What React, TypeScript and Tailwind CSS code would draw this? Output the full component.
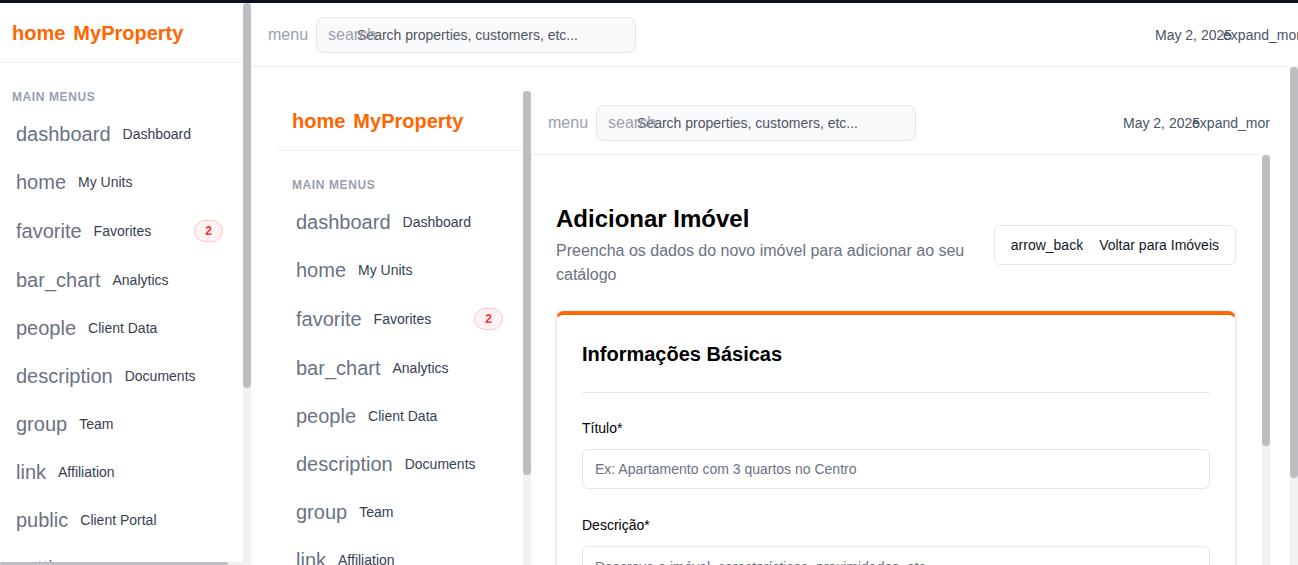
import React from "react";

type Item = { icon: string; label: string; badge?: number };

const ITEMS: Item[] = [
  { icon: "dashboard", label: "Dashboard" },
  { icon: "home", label: "My Units" },
  { icon: "favorite", label: "Favorites", badge: 2 },
  { icon: "bar_chart", label: "Analytics" },
  { icon: "people", label: "Client Data" },
  { icon: "description", label: "Documents" },
  { icon: "group", label: "Team" },
  { icon: "link", label: "Affiliation" },
  { icon: "public", label: "Client Portal" },
  { icon: "settings", label: "Settings" },
  { icon: "help", label: "Help" },
];

function VScroll({ thumb }: { thumb: string }) {
  return (
    <div className="w-2 shrink-0 self-stretch bg-[#f1f1f2]">
      <div className={thumb} />
    </div>
  );
}

function Sidebar({ inner }: { inner?: boolean }) {
  return (
    <div
      className={
        inner
          ? "w-[247px] shrink-0 flex flex-col bg-white"
          : "w-[243px] shrink-0 flex flex-col bg-white"
      }
    >
      <div
        className={`h-[60px] shrink-0 flex items-center gap-2 border-b border-[#f0f0f0] ${
          inner ? "pl-4" : "pl-3"
        } text-[20px] font-bold text-[#ff6600]`}
      >
        <span>home</span>
        <span>MyProperty</span>
      </div>
      <div className="flex-1 min-h-0 overflow-hidden">
        <div
          className={`pt-[26px] ${
            inner ? "pl-4" : "pl-3"
          } text-xs leading-4 font-semibold uppercase tracking-wider text-gray-400`}
        >
          Main Menus
        </div>
        <div className="mt-[5px] flex flex-col">
          {ITEMS.map((it) => (
            <div
              key={it.icon}
              className={`${it.badge ? "h-[50px]" : "h-12"} shrink-0 flex items-center gap-3 ${
                inner ? "pl-5" : "pl-4"
              } pr-5`}
            >
              <span className="text-[20px] leading-7 text-gray-500">{it.icon}</span>
              <span className="text-sm text-gray-700">{it.label}</span>
              {it.badge ? (
                <span className="ml-auto h-[22px] w-[29px] flex items-center justify-center rounded-full border border-red-200 bg-red-50 text-xs font-bold text-red-500">
                  {it.badge}
                </span>
              ) : null}
            </div>
          ))}
        </div>
      </div>
      {!inner && (
        <div className="h-[3px] shrink-0 bg-[#f1f1f2]">
          <div className="h-full w-[228px] rounded-full bg-[#bdbec4]" />
        </div>
      )}
    </div>
  );
}

function Header({ inner }: { inner?: boolean }) {
  return (
    <div className="h-16 shrink-0 flex items-center border-b border-[#f0f0f0] pl-[17px] overflow-hidden bg-white">
      <span className="text-base text-gray-400">menu</span>
      <div className="relative ml-2 w-[320px] h-9 shrink-0">
        <span className="absolute left-3 top-1/2 -translate-y-1/2 text-base text-gray-400 pointer-events-none">
          search
        </span>
        <input
          className="w-full h-full rounded-lg border border-gray-200 bg-gray-50 pl-10 pr-3 text-sm outline-none placeholder:text-[#4f5563]"
          placeholder="Search properties, customers, etc..."
        />
      </div>
      <div className="flex-1" />
      <div
        className={
          inner
            ? "w-[147px] shrink-0 flex items-center whitespace-nowrap text-sm text-gray-600"
            : "w-[143px] shrink-0 flex items-center whitespace-nowrap text-sm text-gray-600"
        }
      >
        <span>May 2, 2025</span>
        <span className={inner ? "-ml-[8px]" : "-ml-[9px]"}>expand_more</span>
      </div>
    </div>
  );
}

function FormPage() {
  return (
    <div className="flex-1 min-w-0 overflow-hidden pl-[25px] pr-[26px] pt-12 bg-white">
      <div className="flex items-center gap-6">
        <div className="flex-1 min-w-0">
          <h1 className="text-2xl font-bold text-black leading-8">Adicionar Imóvel</h1>
          <p className="mt-1 text-base leading-6 text-gray-500">
            Preencha os dados do novo imóvel para adicionar ao seu catálogo
          </p>
        </div>
        <button className="shrink-0 h-10 flex items-center gap-4 rounded-md border border-gray-200 bg-white px-4 text-sm text-gray-900">
          <span>arrow_back</span>
          <span>Voltar para Imóveis</span>
        </button>
      </div>
      <div className="mt-6 rounded-lg border border-gray-200 border-t-4 border-t-[#ff6600] bg-white p-[25px] shadow-[0_1px_4px_rgba(0,0,0,0.12)]">
        <div className="border-b border-gray-200 pb-6">
          <h2 className="text-xl leading-7 font-bold text-black">Informações Básicas</h2>
        </div>
        <div className="mt-[25px]">
          <label className="block text-sm leading-5 text-black mb-[11px]">Título*</label>
          <input
            className="w-full h-10 rounded-md border border-gray-200 bg-white px-3 text-sm outline-none placeholder:text-gray-500"
            placeholder="Ex: Apartamento com 3 quartos no Centro"
          />
        </div>
        <div className="mt-[26px]">
          <label className="block text-sm leading-5 text-black mb-[11px]">Descrição*</label>
          <textarea
            className="w-full h-24 rounded-md border border-gray-200 bg-white px-3 py-2.5 text-sm outline-none resize-none placeholder:text-gray-500"
            placeholder="Descreva o imóvel, características, proximidades, etc."
          />
        </div>
      </div>
    </div>
  );
}

function InnerShell() {
  return (
    <div className="w-[994px] h-[700px] flex bg-white">
      <Sidebar inner />
      <VScroll thumb="h-[384px] w-full rounded-full bg-[#bdbec4]" />
      <div className="flex-1 min-w-0 flex flex-col">
        <Header inner />
        <div className="flex-1 min-h-0 flex">
          <FormPage />
          <VScroll thumb="h-[291px] w-full rounded-full bg-[#bdbec4]" />
        </div>
      </div>
    </div>
  );
}

export default function App() {
  return (
    <div className="w-[1298px] h-[565px] overflow-hidden flex flex-col bg-white font-['Liberation_Sans',Arial,sans-serif]">
      <div className="h-[3px] shrink-0 bg-[#0d1021]" />
      <div className="flex-1 min-h-0 flex">
        <Sidebar />
        <VScroll thumb="h-[385px] w-full rounded-full bg-[#bdbec4]" />
        <div className="flex-1 min-w-0 flex flex-col">
          <Header />
          <div className="flex-1 min-h-0 flex">
            <div className="flex-1 min-w-0 overflow-hidden pl-[25px] pt-6">
              <InnerShell />
            </div>
            <VScroll thumb="h-[411px] w-full rounded-full bg-[#bdbec4]" />
          </div>
        </div>
      </div>
    </div>
  );
}
